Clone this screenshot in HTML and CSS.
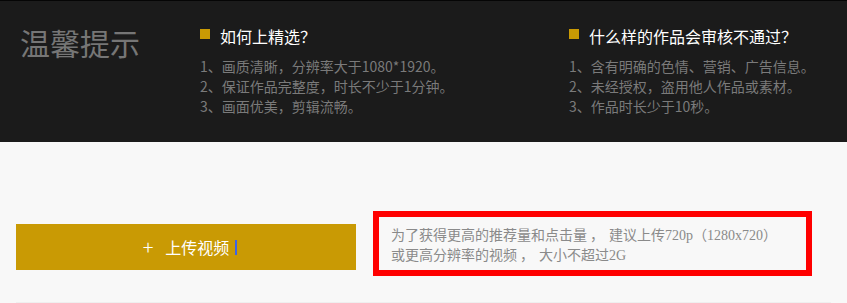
FILE: index.html
```html
<!DOCTYPE html>
<html lang="zh">
<head>
<meta charset="utf-8">
<link rel="stylesheet" href="styles.css">
</head>
<body>
<div class="tips">
  <div class="tips-title">温馨提示</div>
  <div class="tips-col">
    <div class="tips-head"><span class="sq"></span><span>如何上精选？</span></div>
    <ul class="tips-list">
      <li>1、画质清晰，分辨率大于1080*1920。</li>
      <li>2、保证作品完整度，时长不少于1分钟。</li>
      <li>3、画面优美，剪辑流畅。</li>
    </ul>
  </div>
  <div class="tips-col tips-col-last">
    <div class="tips-head"><span class="sq"></span><span>什么样的作品会审核不通过？</span></div>
    <ul class="tips-list">
      <li>1、含有明确的色情、营销、广告信息。</li>
      <li>2、未经授权，盗用他人作品或素材。</li>
      <li>3、作品时长少于10秒。</li>
    </ul>
  </div>
</div>
<div class="upload">
  <div class="upload-row">
    <button class="upload-btn"><span class="plus">+</span><span>上传视频</span><span class="caret"></span></button>
    <div class="notice">为了获得更高的推荐量和点击量<span class="comma">，</span>建议上传720p（1280x720）<br>或更高分辨率的视频<span class="comma">，</span>大小不超过2G</div>
  </div>
</div>
</body>
</html>
```

FILE: styles.css
```css
html, body {
  margin: 0;
  padding: 0;
  background: #f8f8f8;
  font-family: "Noto Sans CJK SC", sans-serif;
}

.tips {
  display: flex;
  align-items: flex-start;
  height: 116px;
  padding-top: 25px;
  background: #1b1b1b;
  border-top: 1px solid #050505;
}

.tips-title {
  flex: none;
  width: 180px;
  margin-left: 20px;
  margin-top: 1px;
  font-size: 30px;
  line-height: 30px;
  color: #767676;
}

.tips-col {
  flex: none;
  width: 369px;
}

.tips-col-last {
  flex: 1;
  width: auto;
}

.tips-head {
  display: flex;
  align-items: flex-start;
  gap: 10px;
  font-size: 16px;
  line-height: 20px;
  color: #ffffff;
}

.sq {
  width: 10px;
  height: 10px;
  margin-top: 3px;
  background: #c99a04;
}

.tips-list {
  list-style: none;
  margin: 10px 0 0;
  padding: 0;
  font-size: 14px;
  line-height: 20px;
  color: #7a7a7a;
}

.upload {
  margin: 0 16px;
  height: 160px;
  border-bottom: 1px solid #efefef;
}

.upload-row {
  display: flex;
  align-items: flex-start;
  gap: 17px;
  padding-top: 69px;
}

.upload-btn {
  flex: none;
  display: flex;
  align-items: center;
  justify-content: center;
  width: 340px;
  height: 46px;
  margin-top: 13px;
  border: 0;
  padding: 0 0 0 8px;
  background: #c99a04;
  color: #ffffff;
  font-family: "Noto Sans CJK SC", sans-serif;
  font-size: 16px;
}

.plus {
  font-size: 20px;
  font-weight: 300;
  margin-right: 12px;
  line-height: 20px;
}

.caret {
  width: 2px;
  height: 15px;
  margin-left: 6px;
  background: #3d64e6;
}

.notice {
  flex: none;
  width: 415px;
  height: 44px;
  padding: 9px 0 0 12px;
  border: 6px solid #ff0000;
  font-family: "Liberation Serif", "Noto Sans CJK SC", serif;
  font-size: 14px;
  line-height: 20px;
  color: #8a8a8a;
}

.comma {
  padding-left: 3px;
  margin-right: 5px;
}
```
